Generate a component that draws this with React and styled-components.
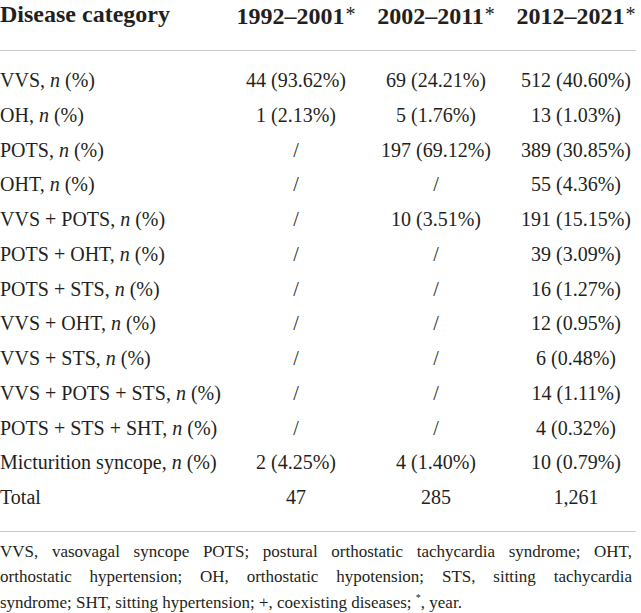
import React from 'react'
import styled, { createGlobalStyle } from 'styled-components'

const GlobalStyle = createGlobalStyle`
  html, body {
    margin: 0;
    padding: 0;
    background: #ffffff;
  }
  body {
    font-family: "Liberation Serif", "Times New Roman", serif;
    color: #231f20;
  }
`

const rows = [
  { label: 'VVS', values: ['44 (93.62%)', '69 (24.21%)', '512 (40.60%)'] },
  { label: 'OH', values: ['1 (2.13%)', '5 (1.76%)', '13 (1.03%)'] },
  { label: 'POTS', values: ['/', '197 (69.12%)', '389 (30.85%)'] },
  { label: 'OHT', values: ['/', '/', '55 (4.36%)'] },
  { label: 'VVS + POTS', values: ['/', '10 (3.51%)', '191 (15.15%)'] },
  { label: 'POTS + OHT', values: ['/', '/', '39 (3.09%)'] },
  { label: 'POTS + STS', values: ['/', '/', '16 (1.27%)'] },
  { label: 'VVS + OHT', values: ['/', '/', '12 (0.95%)'] },
  { label: 'VVS + STS', values: ['/', '/', '6 (0.48%)'] },
  { label: 'VVS + POTS + STS', values: ['/', '/', '14 (1.11%)'] },
  { label: 'POTS + STS + SHT', values: ['/', '/', '4 (0.32%)'] },
  { label: 'Micturition syncope', values: ['2 (4.25%)', '4 (1.40%)', '10 (0.79%)'] },
]

const periods = ['1992–2001', '2002–2011', '2012–2021']

const Page = styled.div`
  width: 636px;
`

const Table = styled.div`
  display: grid;
  grid-template-columns: 226px 140px 140px 130px;
`

const HeadCell = styled.div`
  font-weight: 700;
  font-size: 24px;
  line-height: 28px;
  padding-bottom: 20px;
  border-bottom: 1px solid #c9c9c9;
  text-align: ${props => (props.$label ? 'left' : 'center')};
  padding-left: ${props => (props.$last ? '10px' : '0')};
  white-space: nowrap;
`

const Star = styled.span`
  font-weight: 400;
  font-size: 20px;
  vertical-align: 3px;
  margin-left: 1px;
`

const Cell = styled.div`
  font-size: 20px;
  line-height: 34.75px;
  text-align: ${props => (props.$label ? 'left' : 'center')};
  padding-left: ${props => (props.$last ? '10px' : '0')};
  padding-top: ${props => (props.$first ? '12px' : '0')};
  padding-bottom: ${props => (props.$bottom ? '16px' : '0')};
  border-bottom: ${props => (props.$bottom ? '1px solid #c9c9c9' : 'none')};
  white-space: nowrap;
`

const Footnote = styled.div`
  margin-top: 7px;
  width: 632px;
  font-size: 17px;
`

const NoteLine = styled.div`
  line-height: 25.5px;
  height: 25.5px;
  white-space: nowrap;
  text-align: ${props => (props.$last ? 'left' : 'justify')};
  text-align-last: ${props => (props.$last ? 'left' : 'justify')};
`

const Sup = styled.span`
  font-size: 10px;
  vertical-align: 7px;
  line-height: 0;
`

function Row({ label, values, first, bottom, italicN = true }) {
  return (
    <>
      <Cell $label $first={first} $bottom={bottom}>
        {label}
        {italicN && (
          <>
            , <i>n</i> (%)
          </>
        )}
      </Cell>
      {values.map((v, i) => (
        <Cell key={i} $first={first} $bottom={bottom} $last={i === 2}>
          {v}
        </Cell>
      ))}
    </>
  )
}

export default function App() {
  return (
    <Page>
      <GlobalStyle />
      <Table>
        <HeadCell $label>Disease category</HeadCell>
        {periods.map((p, i) => (
          <HeadCell key={p} $last={i === 2}>
            {p}
            <Star>*</Star>
          </HeadCell>
        ))}
        {rows.map((r, i) => (
          <Row key={r.label} label={r.label} values={r.values} first={i === 0} />
        ))}
        <Row label="Total" values={['47', '285', '1,261']} italicN={false} bottom />
      </Table>
      <Footnote>
        <NoteLine>
          VVS, vasovagal syncope POTS; postural orthostatic tachycardia syndrome; OHT,
        </NoteLine>
        <NoteLine>
          orthostatic hypertension; OH, orthostatic hypotension; STS, sitting tachycardia
        </NoteLine>
        <NoteLine $last>
          syndrome; SHT, sitting hypertension; +, coexisting diseases; <Sup>*</Sup>, year.
        </NoteLine>
      </Footnote>
    </Page>
  )
}
